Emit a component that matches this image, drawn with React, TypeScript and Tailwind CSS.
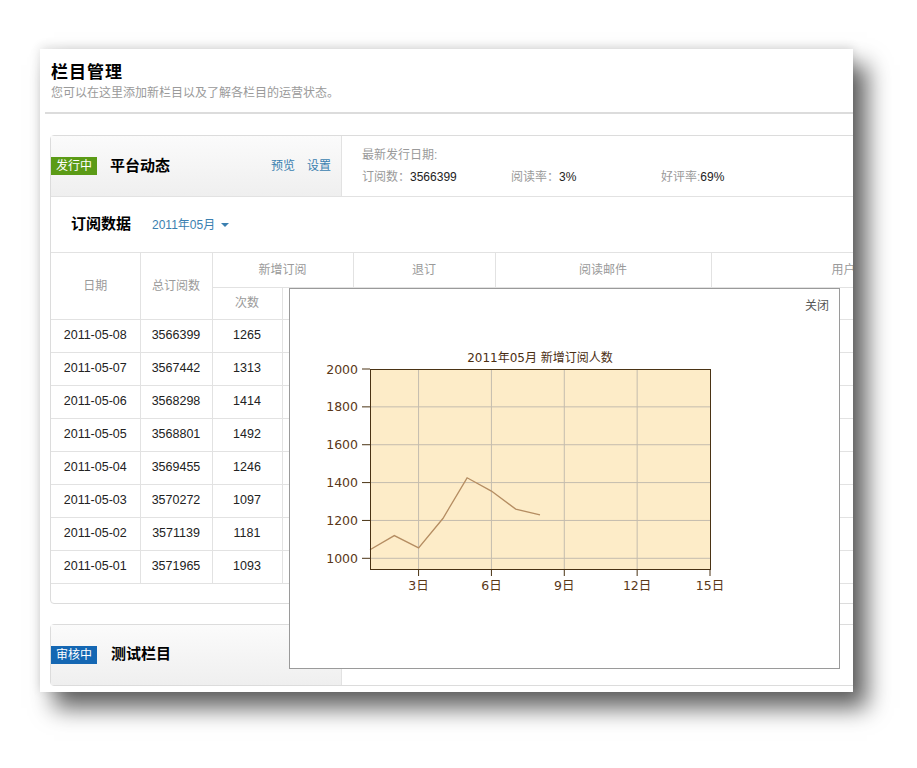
const rows = [
  ["2011-05-08", "3566399", "1265"],
  ["2011-05-07", "3567442", "1313"],
  ["2011-05-06", "3568298", "1414"],
  ["2011-05-05", "3568801", "1492"],
  ["2011-05-04", "3569455", "1246"],
  ["2011-05-03", "3570272", "1097"],
  ["2011-05-02", "3571139", "1181"],
  ["2011-05-01", "3571965", "1093"],
];

// chart data (new subscribers per day)
const points = [1045, 1120, 1055, 1210, 1425, 1355, 1260, 1230];
const xOf = (d: number) => 80 + ((d - 1) * 340) / 14;
const yOf = (v: number) => 46 + (2000 - v) * 0.1893;

function Chart() {
  const line = points.map((v, i) => `${xOf(i + 1).toFixed(1)},${yOf(v).toFixed(1)}`).join(" ");
  return (
    <svg width="549" height="345" className="block font-['DejaVu_Sans','Noto_Sans_CJK_SC',sans-serif]">
      <text x="250" y="39" textAnchor="middle" fontSize="12" fill="#4a2e12">
        2011年05月 新增订阅人数
      </text>
      <rect x="80.5" y="46.5" width="340" height="200" fill="#fdecc8" />
      {[1000, 1200, 1400, 1600, 1800].map((v) => (
        <line key={v} x1="80" x2="420" y1={yOf(v)} y2={yOf(v)} stroke="#c4bcae" strokeWidth="1" />
      ))}
      {[3, 6, 9, 12].map((d) => (
        <line key={d} x1={xOf(d)} x2={xOf(d)} y1="46" y2="246" stroke="#c4bcae" strokeWidth="1" />
      ))}
      <polyline points={line} fill="none" stroke="#b58d62" strokeWidth="1.3" />
      <rect x="80.5" y="46.5" width="340" height="200" fill="none" stroke="#4a3314" strokeWidth="1" />
      {[1000, 1200, 1400, 1600, 1800, 2000].map((v) => (
        <g key={v}>
          <line x1="72" x2="80" y1={yOf(v)} y2={yOf(v)} stroke="#4a3314" />
          <text x="68" y={yOf(v) + 4.5} textAnchor="end" fontSize="12.5" fill="#5a3818">
            {v}
          </text>
        </g>
      ))}
      {[3, 6, 9, 12, 15].map((d) => (
        <g key={d}>
          <line x1={xOf(d)} x2={xOf(d)} y1="246" y2="253" stroke="#4a3314" />
          <text x={xOf(d)} y="267" textAnchor="middle" fontSize="12.5" fill="#5a3818">
            {d}日
          </text>
        </g>
      ))}
    </svg>
  );
}

export default function App() {
  const cell = "border-r border-b border-[#e2e2e2] text-center";
  return (
    <div className="w-[917px] h-[768px] bg-white pt-[49px] pl-[40px] overflow-hidden font-['Liberation_Sans','Noto_Sans_CJK_SC',sans-serif]">
      <div className="relative w-[813px] h-[643px] bg-white overflow-hidden shadow-[14px_16px_22px_rgba(0,0,0,0.62),0_-2px_10px_rgba(0,0,0,0.12)]">
        {/* Header */}
        <div className="pl-[11px] pt-[13px]">
          <h1 className="text-[17px] font-bold leading-[22px] tracking-[1px] text-black">栏目管理</h1>
          <p className="mt-[2px] text-[12px] leading-[14px] text-[#9a9a9a]">
            您可以在这里添加新栏目以及了解各栏目的运营状态。
          </p>
        </div>
        <div className="mt-[12px] ml-[5px] h-[2px] bg-[#dcdcdc]" />

        {/* Column 1 */}
        <div className="mt-[21px] ml-[10px] w-[930px] border border-[#dcdcdc] rounded-[4px] pb-[19px]">
          <div className="flex h-[61px] border-b border-[#e2e2e2]">
            <div className="w-[291px] flex items-center border-r border-[#e2e2e2] bg-gradient-to-b from-[#fbfbfb] to-[#efefef] pr-[10px]">
              <span className="bg-[#5b9b16] text-white text-[12px] leading-[18px] px-[5px]">发行中</span>
              <span className="ml-[13px] text-[15px] font-bold text-black">平台动态</span>
              <span className="ml-auto text-[12px] text-[#3a7fb0]">预览</span>
              <span className="ml-[12px] text-[12px] text-[#3a7fb0]">设置</span>
            </div>
            <div className="flex flex-col justify-center pl-[20px] text-[12px] leading-[22px] text-[#9a9a9a]">
              <div>最新发行日期:</div>
              <div className="flex">
                <span className="w-[149px]">
                  订阅数：<span className="text-[#222]">3566399</span>
                </span>
                <span className="w-[150px]">
                  阅读率：<span className="text-[#222]">3%</span>
                </span>
                <span>
                  好评率:<span className="text-[#222]">69%</span>
                </span>
              </div>
            </div>
          </div>

          <div className="flex items-center h-[56px] border-b border-[#e2e2e2] pl-[20px]">
            <span className="text-[15px] font-bold text-black">订阅数据</span>
            <span className="ml-[21px] text-[12px] text-[#3a7fb0] flex items-center gap-[6px]">
              2011年05月
              <span className="w-0 h-0 border-l-[4px] border-r-[4px] border-t-[4px] border-l-transparent border-r-transparent border-t-[#3a7fb0]" />
            </span>
          </div>

          <table className="w-[925px] table-fixed border-collapse text-[12.5px]">
            <colgroup>
              <col className="w-[89px]" />
              <col className="w-[72px]" />
              <col className="w-[70px]" />
              <col className="w-[71px]" />
              <col className="w-[72px]" />
              <col className="w-[70px]" />
              <col className="w-[72px]" />
              <col className="w-[72px]" />
              <col className="w-[72px]" />
              <col className="w-[73px]" />
              <col className="w-[72px]" />
              <col className="w-[120px]" />
            </colgroup>
            <thead className="text-[12px] text-[#9a9a9a] font-normal">
              <tr className="h-[34px]">
                <th rowSpan={2} className={`${cell} font-normal`}>日期</th>
                <th rowSpan={2} className={`${cell} font-normal`}>总订阅数</th>
                <th colSpan={2} className={`${cell} font-normal`}>新增订阅</th>
                <th colSpan={2} className={`${cell} font-normal`}>退订</th>
                <th colSpan={3} className={`${cell} font-normal`}>阅读邮件</th>
                <th colSpan={3} className={`${cell} font-normal`}>用户</th>
              </tr>
              <tr className="h-[32px]">
                <th className={`${cell} font-normal`}>次数</th>
                {Array.from({ length: 9 }).map((_, i) => (
                  <th key={i} className={`${cell} font-normal`} />
                ))}
              </tr>
            </thead>
            <tbody className="text-[#222]">
              {rows.map((r) => (
                <tr key={r[0]} className="h-[33px]">
                  <td className={cell}>{r[0]}</td>
                  <td className={cell}>{r[1]}</td>
                  <td className={cell}>{r[2]}</td>
                  {Array.from({ length: 9 }).map((_, i) => (
                    <td key={i} className={cell} />
                  ))}
                </tr>
              ))}
            </tbody>
          </table>
        </div>

        {/* Column 2 */}
        <div className="mt-[20px] ml-[10px] w-[930px] h-[62px] border border-[#dcdcdc] rounded-[4px] flex">
          <div className="w-[291px] flex items-center border-r border-[#e2e2e2] bg-gradient-to-b from-[#fbfbfb] to-[#efefef]">
            <span className="bg-[#1467b3] text-white text-[12px] leading-[18px] px-[5px]">审核中</span>
            <span className="ml-[14px] text-[15px] font-bold text-black">测试栏目</span>
          </div>
        </div>

        {/* Chart popup */}
        <div className="absolute left-[249px] top-[239px] w-[551px] h-[381px] border border-[#9a9a9a] bg-white">
          <div className="flex justify-end items-center h-[34px] pr-[10px] text-[12px] text-[#555]">关闭</div>
          <Chart />
        </div>
      </div>
    </div>
  );
}
